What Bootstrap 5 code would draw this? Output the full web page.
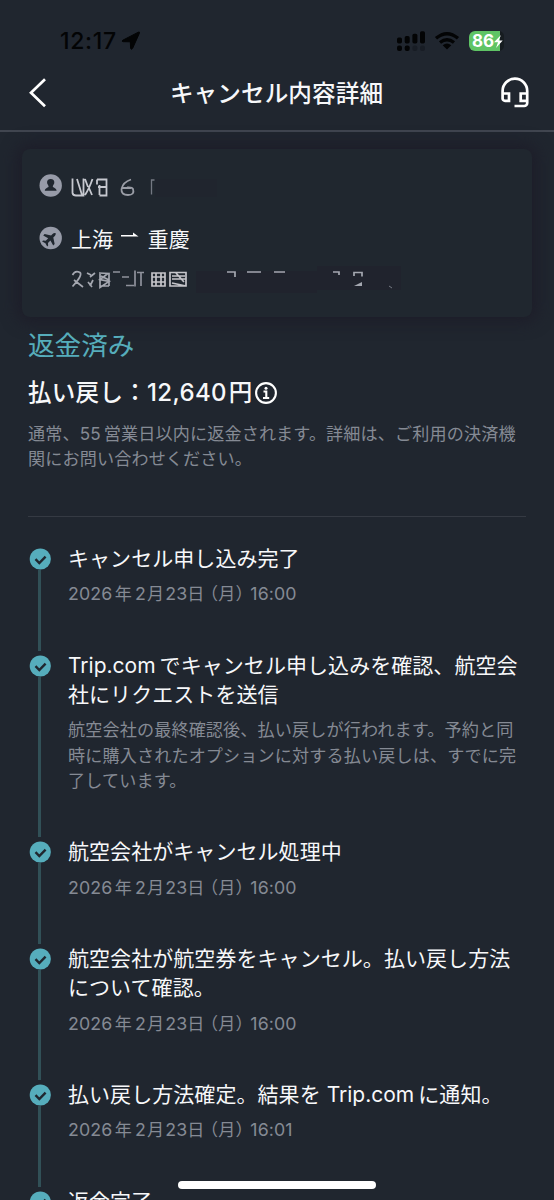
<!DOCTYPE html>
<html lang="ja">
<head>
<meta charset="utf-8">
<meta name="viewport" content="width=device-width, initial-scale=1">
<title>キャンセル内容詳細</title>
<link href="https://cdn.jsdelivr.net/npm/bootstrap@5.3.0/dist/css/bootstrap.min.css" rel="stylesheet">
<style>
html,body{height:1200px;overflow:hidden}
body{background:#20262f;color:#f7f8fa;font-family:Inter,"Noto Sans CJK JP",sans-serif;white-space:nowrap}
svg{display:block;flex:none}
.status{height:60px;padding:23px 48px 0 60px;color:#030405}
.clock{font-size:23px;line-height:37px;font-weight:500;letter-spacing:.7px}
.topbar{height:72px;padding:3px 24px 0 28px;border-bottom:2px solid #414650}
.topbar h1{font-size:23.6px;line-height:34px;font-weight:500;margin:14px 0 0 5px;letter-spacing:.1px}
.trip{margin:17px 22px 0;height:168px;border-radius:8px;background:#20272f;box-shadow:0 0 16px 5px #1d1d29;padding:20px 0 0 17px}
.trip .route{font-size:20.9px;line-height:37px;height:34px}
.summary{margin:0 28px;height:200px;border-bottom:1px solid #353a43;padding-top:10px}
.state{font-size:26.6px;line-height:36px;color:#56adbb}
.amount{font-size:23.5px;line-height:34px;font-weight:500;margin-top:13px;letter-spacing:.3px}
.amount .num{font-size:24px;letter-spacing:.35px;margin-right:2px}
.note{font-size:17.1px;line-height:25.3px;color:#858a94;letter-spacing:.14px}
.summary .note{margin-top:11px}
.steps{margin:27px 0 0 28px}
.step{display:flex;gap:15px}
.rail{width:25px}
.rail svg{margin-top:4px}
.rail i{width:3px;background:#315057;margin:0 0 0 10px;flex:1}
.ttl{font-size:21px;line-height:29.4px;letter-spacing:.06px}
.ttl span{letter-spacing:0;margin-right:4px}
.dsc{margin:7.8px 0 44.2px}
.date b{font-weight:400;font-size:17.8px;letter-spacing:.1px}
.date .yr{margin-right:2.5px}
.date .mo{margin-left:3px;margin-right:1px}
.date .dy{margin-left:1px}
.par{font-feature-settings:"halt";margin:0 6px 0 5px;letter-spacing:.2px}
.homebar{left:178px;top:1181px;width:198px;height:8px;border-radius:4px;background:#fff}
</style>
</head>
<body class="position-relative">
<svg width="0" height="0" class="position-absolute"><defs><g id="done"><circle cx="12.3" cy="11" r="10.6" fill="#56adbc"/><path d="M7.5 11.2l3.8 3.8 6.3-6.4" fill="none" stroke="#20272f" stroke-width="2.4"/></g></defs></svg>
<div class="status d-flex">
  <span class="clock">12:17</span>
  <svg width="20" height="20" viewBox="0 0 20 20" style="margin:8px 0 0 4px"><path d="M1.8 9.2L17.3 1.2Q19 .5 18.4 2.2L11.7 17.2Q10.2 19.4 9.6 17.2L9.3 10.8 2.4 10.7Q0 10.2 1.8 9.2z" fill="#030405" stroke="#030405" stroke-width="1"/></svg>
  <svg class="ms-auto" width="110" height="22" viewBox="0 0 110 22" style="margin-top:7px">
    <g fill="#030405"><rect x="1" y="7.5" width="5" height="6" rx="1.7"/><rect x="8.7" y="6" width="5" height="7.5" rx="1.7"/><rect x="16.4" y="3.7" width="5" height="9.8" rx="1.7"/><rect x="24" y="1.3" width="5" height="12.2" rx="1.7"/><rect x="1" y="15.5" width="5" height="5.5" rx="2"/><rect x="8.7" y="15.5" width="5" height="5.5" rx="2"/></g>
    <g fill="#181d25"><rect x="16.4" y="15.5" width="5" height="5.5" rx="2"/><rect x="24" y="15.5" width="5" height="5.5" rx="2"/></g>
    <g fill="none" stroke="#030405" stroke-width="3.4"><path d="M40 8.3Q51-1 62 8.3M44 12.5Q51 6.800 58 12.500"/></g><path d="M46.700 15.200Q51 12 55.300 15.200L51 19.600z" fill="#030405"/>
    <path d="M104 1a6 6 0 0 1 4 6v8a6 6 0 0 1-4 6z" fill="#161c20"/><path d="M79 1h25v20H79a6 6 0 0 1-6-6V7a6 6 0 0 1 6-6z" fill="#5fc465"/>
    <text x="76" y="17.300" font-size="17" font-weight="700" fill="#fff" textLength="22">86</text><path d="M105 5l-7 7.300h4l-2 5.700 6.700-7.500h-4z" fill="#fff"/>
  </svg>
</div>
<header class="topbar d-flex justify-content-between">
  <svg width="20" height="32" viewBox="0 0 20 32" style="margin-top:14px"><path d="M17 2.300L3 15.700l14 13.500" fill="none" stroke="#fff" stroke-width="2.700"/></svg>
  <h1>キャンセル内容詳細</h1>
  <svg width="30" height="34" viewBox="0 0 30 34" style="margin-top:13px" fill="none" stroke="#fff" stroke-width="2.700"><path d="M2.600 23V15a12.300 12.300 0 0 1 24.600 0V27a3 3 0 0 1-3 3H14.500M2.600 17.500H9V24.800H5a2.400 2.400 0 0 1-2.400-2.400M27.200 17.500H20.700V24.800H27.200"/></svg>
</header>
<section class="trip">
  <div class="d-flex">
    <svg width="32" height="34" viewBox="0 0 32 34"><circle cx="11.700" cy="16.500" r="11.200" fill="#979ba8"/><path d="M11.700 10c2.400 0 3.900 1.600 3.600 3.900-.2 1.500-1.500 2.300-1.500 3.500 0 1.200 3.600 1.300 3.800 4.300H5.800c.2-3 3.800-3.100 3.800-4.300s-1.300-2-1.500-3.500c-.3-2.300 1.200-3.900 3.600-3.900z" fill="#20272f"/></svg>
    <svg width="160" height="34" viewBox="0 0 160 34"><rect x="84" y="10" width="62" height="18" fill="#201f2b" opacity=".25"/><g fill="none" stroke="#c6c8cf" stroke-width="1.800"><path d="M1.500 9.500V24Q2 26.500 5 26.500H12.500V9.500M6 10l5 16M14 10l3 8M21.500 10Q18 20 14 26M18 19l3 7M26 10.500h9.500v16h-7M26 10.500v5M27 18h8M28.500 16v10"/><path d="M60 10.500Q52 13 50.500 20M51 19h9M50.500 20Q50 26 57 26T62 20q-1-2-6-1.500" stroke="#9a9da6"/><path d="M80.500 25.500V11h3" stroke="#747983" stroke-width="1.300"/></g></svg>
  </div>
  <div class="d-flex route" style="margin-top:18px">
    <svg width="32" height="34" viewBox="0 0 32 34"><circle cx="11.700" cy="17" r="11.200" fill="#979ba8"/><g transform="translate(11.300 17.400) rotate(45) scale(.92)"><path d="M0-8.200q1.700 1.100 1.700 3v2.300l6 3.900v2.200l-6-1.700v3.800l2.200 1.900v1.500L0 7.500l-3.900 1.200V7.200l2.200-1.900V1.500l-6 1.700V1l6-3.900v-2.300q0-1.900 1.700-3z" fill="#20272f"/></g></svg>
    <span>上海</span>
    <svg width="18" height="34" viewBox="0 0 18 34" style="margin:0 9px 0 8px"><path d="M0 15.500h17.500L12 11.500V14H0z" fill="#fff"/></svg>
    <span>重慶</span>
  </div>
  <svg width="350" height="34" viewBox="0 0 350 34" style="margin:8px 0 0 32px"><path d="M125 8H246V3H330V27H246V30H125z" fill="#201f2b" opacity=".5"/><g fill="none" stroke="#a4a7b0" stroke-width="1.700"><path d="M1.500 12Q4 7 9 9.500Q12 12 1.500 23.500M3 17l9 7M16 10l4 2M24 10l-5 4M17 19l4 5M22 17l-3 6M28 10l9 .5-8 6 9 2-9 6V10M38 10v13M30 13l8 4M29 23h9"/><path d="M42 9h7M51 14h7M55 22.500h8M64 7.500v16M70 10v13M66 9.500h7" stroke="#8f929c"/><path d="M81 10h13v13H81zM81 14h13M81 19h13M85 10v13M90 10v13M99 9.500h16v13.500H99zM101 13h13M101 16h14M101 20l14 3M105 10l8 9" stroke="#c5c5ca"/><path d="M156 9h8v5M176 9h14M203 9h11M262 9h6v3M283 13V9.500h8v4"/></g><path d="M283 23l8-4v4z" fill="#a4a7b0"/><path d="M318 23l3 2" stroke="#747983"/></svg>
</section>
<section class="summary">
  <div class="state">返金済み</div>
  <div class="amount d-flex align-items-center"><span>払い戻し：</span><span class="num">12,640</span><span>円</span>
    <svg width="24" height="24" viewBox="0 0 24 24" fill="none" stroke="#fff" stroke-width="2.100" style="margin-left:1px"><circle cx="12" cy="12" r="9.900"/><path d="M9.500 10.500H12.300V16.500M9 17h6.200"/><circle cx="12" cy="7.200" r="1.500" fill="#fff" stroke="none"/></svg>
  </div>
  <div class="note">通常、<span style="margin-right:3px">55</span>営業日以内に返金されます。詳細は、ご利用の決済機<br>関にお問い合わせください。</div>
</section>
<main class="steps">
  <div class="step"><div class="rail d-flex flex-column"><svg width="25" height="22"><use href="#done"/></svg><i></i></div><div><div class="ttl">キャンセル申し込み完了</div><div class="note dsc date"><b class="yr">2026</b>年<b class="mo">2</b>月<b class="dy">23</b>日<span class="par">（月）</span><b>16:00</b></div></div></div>
  <div class="step"><div class="rail d-flex flex-column"><svg width="25" height="22"><use href="#done"/></svg><i></i></div><div><div class="ttl"><span>Trip.com</span>でキャンセル申し込みを確認、航空会<br>社にリクエストを送信</div><div class="note dsc">航空会社の最終確認後、払い戻しが行われます。予約と同<br>時に購入されたオプションに対する払い戻しは、すでに完<br>了しています。</div></div></div>
  <div class="step"><div class="rail d-flex flex-column"><svg width="25" height="22"><use href="#done"/></svg><i></i></div><div><div class="ttl">航空会社がキャンセル処理中</div><div class="note dsc date"><b class="yr">2026</b>年<b class="mo">2</b>月<b class="dy">23</b>日<span class="par">（月）</span><b>16:00</b></div></div></div>
  <div class="step"><div class="rail d-flex flex-column"><svg width="25" height="22"><use href="#done"/></svg><i></i></div><div><div class="ttl">航空会社が航空券をキャンセル。払い戻し方法<br>について確認。</div><div class="note dsc date"><b class="yr">2026</b>年<b class="mo">2</b>月<b class="dy">23</b>日<span class="par">（月）</span><b>16:00</b></div></div></div>
  <div class="step"><div class="rail d-flex flex-column"><svg width="25" height="22"><use href="#done"/></svg><i></i></div><div><div class="ttl">払い戻し方法確定。結果を <span>Trip.com</span>に通知。</div><div class="note dsc date"><b class="yr">2026</b>年<b class="mo">2</b>月<b class="dy">23</b>日<span class="par">（月）</span><b>16:01</b></div></div></div>
  <div class="step"><div class="rail d-flex flex-column"><svg width="25" height="22"><use href="#done"/></svg></div><div class="ttl">返金完了</div></div>
</main>
<div class="homebar position-absolute"></div>
<script src="https://cdn.jsdelivr.net/npm/bootstrap@5.3.0/dist/js/bootstrap.bundle.min.js"></script>
</body>
</html>
